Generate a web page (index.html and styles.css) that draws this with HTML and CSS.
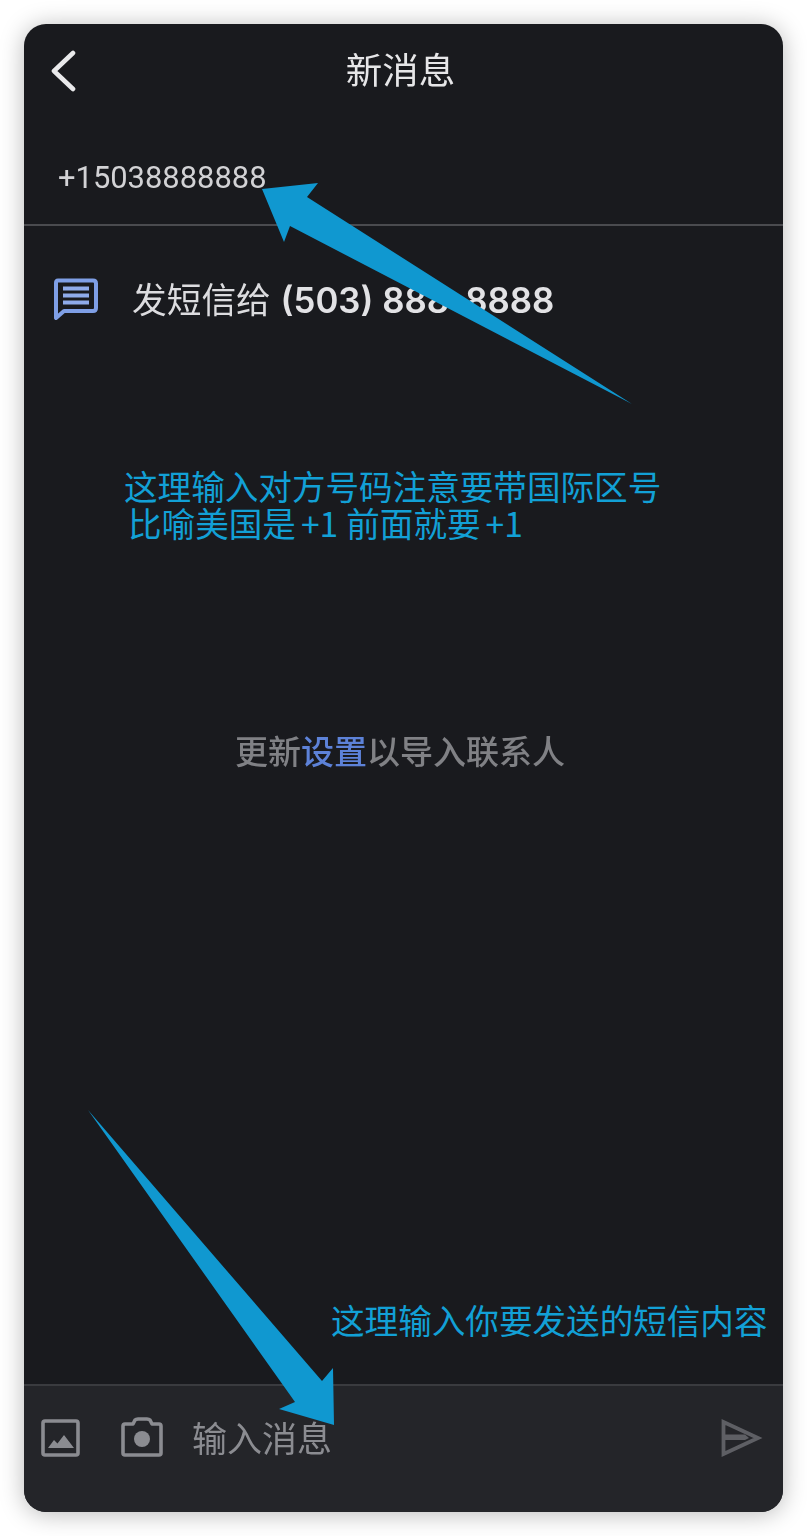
FILE: index.html
```html
<!DOCTYPE html>
<html lang="zh-CN">
<head>
<meta charset="utf-8">
<title>新消息</title>
<link rel="stylesheet" href="styles.css">
</head>
<body>
<main class="phone">
  <div class="app">
    <header class="topbar">
      <svg class="back" viewBox="0 0 28 42" width="28" height="42"><path d="M24 3 L5 21 L24 39" fill="none" stroke="#e9e9eb" stroke-width="4.6" stroke-linecap="round" stroke-linejoin="round"/></svg>
      <h1 class="title">新消息</h1>
    </header>
    <div class="recipient">+15038888888</div>
    <div class="suggestion">
      <svg class="msg-icon" viewBox="0 0 44 42" width="44" height="42">
        <path d="M4 2.5 H39 Q42 2.5 42 5.5 V30 Q42 33 39 33 H10 L2 40 V5 Q2 2.5 4 2.5 Z" fill="none" stroke="#7f9fe6" stroke-width="4" stroke-linejoin="round"/>
        <path d="M9 10.5 H35 M9 17.5 H35 M9 24.5 H35" fill="none" stroke="#8fabea" stroke-width="4.2"/>
      </svg>
      <span class="suggestion-text">发短信给 <b class="number">(503) 888-8888</b></span>
    </div>
    <p class="empty">更新<span class="link">设置</span>以导入联系人</p>
    <footer class="composer">
      <svg class="tool" viewBox="0 0 40 38" width="40" height="38">
        <rect x="2" y="2" width="35" height="34" rx="2" fill="none" stroke="#8b8c91" stroke-width="3.6"/>
        <path d="M7 29 L13 21 L16.5 24.5 L23 16 L33 29 Z" fill="#8b8c91"/>
      </svg>
      <svg class="tool camera" viewBox="0 0 42 40" width="42" height="40">
        <path d="M4 7 H12 L14 3 Q15 2 17 2 H26 Q28 2 29 3 L31 7 H38 Q40 7 40 9 V36 Q40 38 38 38 H4 Q2 38 2 36 V9 Q2 7 4 7 Z" fill="none" stroke="#8b8c91" stroke-width="3.6" stroke-linejoin="round"/>
        <circle cx="21" cy="22" r="8" fill="#8b8c91"/>
      </svg>
      <span class="placeholder">输入消息</span>
      <svg class="send" viewBox="0 0 42 38" width="42" height="38">
        <path d="M2.5 3 L37 19 L2.5 35 Z" fill="none" stroke="#5e5f64" stroke-width="3.8" stroke-linejoin="miter"/>
        <path d="M4 15.5 H24 L28 19 L24 21 H4 Z" fill="#5e5f64"/>
      </svg>
    </footer>
  </div>
  <svg class="arrows" viewBox="0 0 759 1488" width="759" height="1488">
    <path d="M238 165 L294 159 L283 173 L608 380 L266 202 L260 218 Z" fill="#1098d0"/>
    <path d="M64 1086 L298 1357 L309 1344 L310 1401 L255 1385 L271 1378 Z" fill="#1098d0"/>
  </svg>
  <p class="note note-top">这理输入对方号码注意要带国际区号<br><span class="indent">比喻美国是 +1 <span class="second">前面就要 +1</span></span></p>
  <p class="note note-bottom">这理输入你要发送的短信内容</p>
</main>
</body>
</html>
```
FILE: styles.css
```css
* { box-sizing: border-box; }
html, body { margin: 0; padding: 0; background: #fff; }
body { width: 807px; height: 1536px; overflow: hidden; padding: 24px; font-family: "Noto Sans CJK SC", "Liberation Sans", sans-serif; }
.phone { position: relative; width: 759px; height: 1488px; border-radius: 22px; background: #191a1e; box-shadow: 0 2px 24px rgba(0,0,0,.28); }
.app { display: flex; flex-direction: column; height: 100%; border-radius: 22px; overflow: hidden; filter: blur(.4px); }
.topbar { position: relative; height: 94px; display: flex; align-items: center; justify-content: center; padding: 0 6px 4px 0; }
.back { position: absolute; left: 25px; top: 26px; }
.title { margin: 0; font-size: 36.5px; font-weight: 400; line-height: 50px; color: #e6e6e8; }
.recipient { height: 108px; padding: 39px 0 0 34px; border-bottom: 2px solid #4a4b4f; font-family: Roboto, "Liberation Sans", sans-serif; font-size: 30.9px; line-height: 42px; color: #d2d2d5; }
.suggestion { display: flex; align-items: center; gap: 34px; height: 146px; padding: 0 0 0 30px; }
.msg-icon { flex: none; }
.suggestion-text { font-size: 34.7px; line-height: 48px; color: #dcdcdf; }
.number { margin-left: 2px; font-family: Inter, "Liberation Sans", sans-serif; font-weight: 600; font-size: 34.8px; color: #e2e2e5; }
.empty { margin: 0; padding-top: 355px; padding-right: 7px; text-align: center; font-size: 33px; font-weight: 500; line-height: 46px; color: #808185; flex: 1; }
.link { color: #5d82d8; }
.composer { display: flex; align-items: flex-start; height: 128px; padding-top: 33px; border-top: 2px solid #3a3b3f; background: #242529; }
.tool { flex: none; margin-left: 17px; }
.camera { margin-left: 40px; margin-top: -2px; }
.placeholder { margin: -6px 0 0 29px; font-size: 35px; line-height: 48px; color: #8b8c91; flex: 1; }
.send { flex: none; margin: 0 20px 0 0; }
.arrows { position: absolute; left: 0; top: 0; pointer-events: none; }
.note { position: absolute; margin: 0; color: #12a0d6; white-space: nowrap; }
.note-top { left: 100px; top: 443px; font-size: 33.6px; line-height: 37px; }
.indent { margin-left: 4px; word-spacing: -2.5px; }
.second { margin-left: 3px; }
.note-bottom { left: 307px; top: 1273px; font-size: 33.6px; line-height: 46px; }
```
